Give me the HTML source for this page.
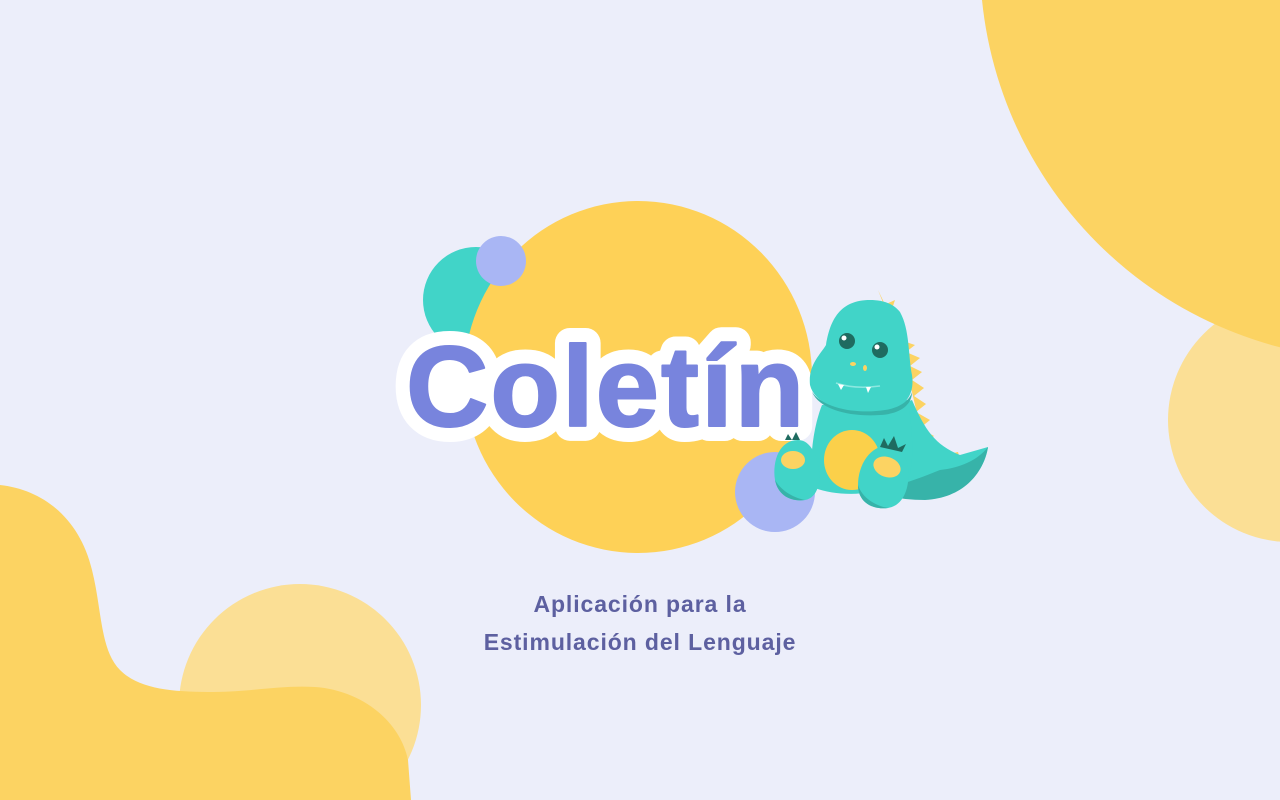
<!DOCTYPE html>
<html><head><meta charset="utf-8"><style>
html,body{margin:0;padding:0}
body{width:1280px;height:800px;overflow:hidden;background:#eceefa;position:relative;font-family:"Liberation Sans",sans-serif}
svg{position:absolute;left:0;top:0}
.sub{position:absolute;left:0;width:1280px;text-align:center;color:#5d60a0;font-weight:bold;font-size:23px;letter-spacing:0.9px}
</style></head><body>
<svg width="1280" height="800" viewBox="0 0 1280 800">
  <circle cx="1290" cy="420" r="122" fill="#fbdf95"/>
  <circle cx="1380" cy="-40" r="400" fill="#fcd362"/>
  <circle cx="300" cy="705" r="121" fill="#fbdf95"/>
  <path d="M0 485 C45 490 80 520 92 570 C102 610 100 650 120 670 C140 690 175 692 214 692 C250 692 280 685 315 687 C360 690 400 720 408 760 L411 800 L0 800 Z" fill="#fcd362"/>
  <circle cx="476" cy="300" r="53" fill="#41d4c8"/>
  <ellipse cx="638" cy="377" rx="174" ry="176" fill="#fed157"/>
  <circle cx="501" cy="261" r="25" fill="#a9b6f4"/>
  <circle cx="775" cy="492" r="40" fill="#a9b6f4"/>
  <circle cx="452" cy="385" r="40" fill="#fff"/>
  <text x="406" y="426" font-family="Liberation Sans" font-weight="bold" font-size="114" letter-spacing="2" fill="#fff" stroke="#fff" stroke-width="30" stroke-linejoin="round">Coletín</text>
  <text x="406" y="426" font-family="Liberation Sans" font-weight="bold" font-size="114" letter-spacing="2" fill="#7884dd" stroke="#7884dd" stroke-width="2" stroke-linejoin="round">Coletín</text>
  <g>
    <path d="M900 340 L915 345 L906 352 L920 358 L910 366 L922 372 L912 380 L924 388 L914 396 L926 404 L916 412 L930 420 L920 428 L934 436 L926 442 L942 448 L940 456 L958 452 L960 460 L975 452 L985 448 L930 470 Z" fill="#fcd362"/>
    <path d="M878 290 L884 305 L895 300 L890 315 Z" fill="#fcd362"/>
    <path d="M850 420 C870 410 900 405 912 400 C925 430 935 445 960 455 L988 447 C985 470 965 495 930 498 C895 500 860 490 820 480 Z" fill="#41d4c8"/>
    <path d="M940 470 C960 468 978 460 988 447 C983 475 962 498 925 500 C900 500 880 495 870 490 C895 488 920 478 940 470Z" fill="#37b3a9"/>
    <path d="M822 405 C812 430 808 470 815 488 C840 498 885 495 908 480 C915 460 912 430 908 400 Z" fill="#41d4c8"/>
    <ellipse cx="852" cy="460" rx="28" ry="30" fill="#fbd04a"/>
    <path d="M870 300 C840 300 830 320 826 345 C820 355 808 365 810 385 C815 405 845 415 880 412 C905 410 915 395 912 375 C908 355 910 330 900 312 C893 303 882 300 870 300Z" fill="#41d4c8"/>
    <path d="M812 392 C825 410 860 414 885 410 C900 408 910 400 912 392 C912 405 900 414 880 415 C850 417 820 410 812 392Z" fill="#37b3a9"/>
    <circle cx="847" cy="341" r="8" fill="#1f6b60"/><circle cx="844" cy="338" r="2.5" fill="#fff"/>
    <circle cx="880" cy="350" r="8" fill="#1f6b60"/><circle cx="877" cy="347" r="2.5" fill="#fff"/>
    <ellipse cx="853" cy="364" rx="3" ry="2" fill="#fcd362"/>
    <ellipse cx="865" cy="368" rx="2" ry="3" fill="#fcd362"/>
    <path d="M836 383 C850 388 865 388 880 386" stroke="#8ce8e0" stroke-width="1.5" fill="none"/>
    <path d="M838 384 L841 390 L844 385Z M866 387 L868 393 L871 387Z" fill="#fff"/>
    <path d="M798 440 C780 440 772 460 775 480 C778 495 790 502 805 500 C818 498 822 480 818 465 C815 450 808 440 798 440Z" fill="#41d4c8"/>
    <path d="M775 480 C778 495 790 502 805 500 C795 498 782 492 775 480Z" fill="#37b3a9"/>
    <ellipse cx="793" cy="460" rx="12" ry="9" fill="#fcd362"/>
    <path d="M785 440 L788 434 L792 440 L796 432 L800 440Z" fill="#1f6b60"/>
    <path d="M890 445 C870 445 858 465 858 485 C858 502 872 510 888 508 C905 505 910 485 908 468 C906 455 900 445 890 445Z" fill="#41d4c8"/>
    <path d="M858 485 C858 502 872 510 888 508 C876 506 862 498 858 485Z" fill="#37b3a9"/>
    <ellipse cx="887" cy="467" rx="14" ry="10" fill="#fcd362" transform="rotate(20 887 467)"/>
    <path d="M880 447 L884 438 L888 446 L894 436 L898 448 L906 444 L902 452Z" fill="#1f6b60"/>
  </g>
</svg>
<div class="sub" style="top:591px">Aplicación para la</div>
<div class="sub" style="top:629px">Estimulación del Lenguaje</div>
</body></html>
